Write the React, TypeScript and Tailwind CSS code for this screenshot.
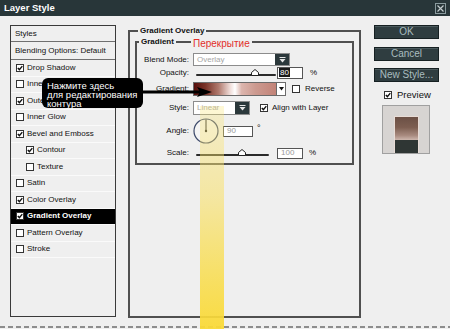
import React from "react";

function Check({ checked }: { checked?: boolean }) {
  return (
    <span className="w-[8px] h-[8px] border border-[#333] bg-white flex items-center justify-center shrink-0">
      {checked && (
        <svg width="6" height="6" viewBox="0 0 6 6">
          <path d="M0.8 2.9 L2.4 4.6 L5.3 1.1" stroke="#111" strokeWidth="1.4" fill="none" />
        </svg>
      )}
    </span>
  );
}

function DarkArrowBtn() {
  return (
    <div className="w-[14px] bg-[#2b383b] flex items-center justify-center">
      <svg width="7" height="6" viewBox="0 0 7 6">
        <rect x="0.5" y="0" width="6" height="1" fill="#e6e6e6" />
        <path d="M0.5 2 H6.5 L3.5 5.5 Z" fill="#e6e6e6" />
      </svg>
    </div>
  );
}

function Slider({ w, h, trackTop, thumbTop, thumb }: { w: string; h: string; trackTop: string; thumbTop: string; thumb: number }) {
  return (
    <div className={`relative shrink-0 ${w} ${h}`}>
      <div className={`absolute left-[3px] right-[1px] h-[2px] bg-[#2a2a2a] rounded-full ${trackTop}`} />
      <svg className={`absolute ${thumbTop}`} style={{ left: thumb }} width="8" height="7" viewBox="0 0 8 7">
        <path d="M0.5 6.5 V3.5 L4 0.5 L7.5 3.5 V6.5 Z" fill="#fff" stroke="#222" strokeWidth="1" />
      </svg>
    </div>
  );
}

const rows: { label: string; checked?: boolean; indent?: boolean; selected?: boolean }[] = [
  { label: "Drop Shadow", checked: true },
  { label: "Inner Shadow" },
  { label: "Outer Glow", checked: true },
  { label: "Inner Glow" },
  { label: "Bevel and Emboss", checked: true },
  { label: "Contour", checked: true, indent: true },
  { label: "Texture", indent: true },
  { label: "Satin" },
  { label: "Color Overlay", checked: true },
  { label: "Gradient Overlay", checked: true, selected: true },
  { label: "Pattern Overlay" },
  { label: "Stroke" },
];

function Btn({ children, className }: { children: React.ReactNode; className?: string }) {
  return (
    <div
      className={`h-[14px] bg-[#2f3d40] border border-[#162022] shadow-[inset_0_1px_0_#4c5b5e] flex items-center justify-center text-[10px] leading-none text-[#a9bcbf] ${className ?? ""}`}
    >
      {children}
    </div>
  );
}

export default function App() {
  return (
    <div className="w-[450px] h-[329px] relative overflow-hidden bg-[#efefef] flex flex-col font-['Liberation_Sans',Arial,sans-serif] text-[#111]">
      {/* title bar */}
      <div className="h-[16px] shrink-0 bg-[#283639] flex items-center justify-between pl-[4px] pr-[4px]">
        <span className="text-white font-bold text-[9.5px] leading-none">Layer Style</span>
        <span className="w-[11px] h-[11px] border border-[#8a9b9e] flex items-center justify-center">
          <svg width="7" height="7" viewBox="0 0 7 7">
            <path d="M0.5 0.5 L6.5 6.5 M6.5 0.5 L0.5 6.5" stroke="#c3ccce" strokeWidth="1.2" />
          </svg>
        </span>
      </div>

      {/* body */}
      <div className="flex flex-1 items-start">
        {/* left list */}
        <div className="ml-[10px] mt-[9px] w-[106px] h-[292px] border border-[#3a3a3a] flex flex-col text-[8px] leading-none">
          <div className="h-[16px] flex items-center pl-[4px] border-b border-[#6f6f6f]">Styles</div>
          <div className="h-[18px] flex items-center pl-[4px] border-b border-[#6f6f6f]">Blending Options: Default</div>
          {rows.map((r) => (
            <div
              key={r.label}
              className={`h-[16.5px] flex items-center gap-[3px] border-b border-[#fafafa] ${r.indent ? "pl-[15px]" : "pl-[5px]"} ${r.selected ? "bg-black text-white font-bold" : ""}`}
            >
              <Check checked={r.checked} />
              <span>{r.label}</span>
            </div>
          ))}
        </div>

        {/* middle group */}
        <fieldset className="ml-[12px] mt-[10px] w-[233px] h-[292px] border-2 border-[#505050] px-[5px]">
          <legend className="ml-[3px] px-[2px] text-[8px] font-bold leading-[10px]">Gradient Overlay</legend>
          <fieldset className="mt-[1px] h-[128px] border-2 border-[#505050] text-[8px] leading-none">
            <legend className="ml-[2px] px-[2px] text-[8px] font-bold leading-[10px]">Gradient</legend>

            {/* Blend Mode */}
            <div className="mt-[6px] h-[13px] flex items-center">
              <span className="w-[52px] text-right">Blend Mode:</span>
              <div className="ml-[4px] w-[97px] h-[13px] flex border border-[#8c8c8c] bg-white">
                <div className="flex-1 pl-[3px] flex items-center text-[#a6a6a6]">Overlay</div>
                <DarkArrowBtn />
              </div>
            </div>

            {/* Opacity */}
            <div className="h-[13px] flex items-center">
              <span className="w-[52px] text-right">Opacity:</span>
              <div className="ml-[4px] flex items-center h-[13px]">
                <Slider w="w-[84px]" h="h-[13px]" trackTop="top-[8px]" thumbTop="top-[3px]" thumb={58} />
                <div className="w-[26px] h-[12px] border border-[#555] bg-white flex items-center pl-[1px]">
                  <span className="bg-[#1a1a1a] text-white px-[1px] h-[9px] flex items-center">80</span>
                </div>
                <span className="ml-[7px]">%</span>
              </div>
            </div>

            {/* Gradient */}
            <div className="mt-[3px] h-[14px] flex items-center">
              <span className="w-[52px] text-right">Gradient:</span>
              <div className="ml-[4px] flex items-center h-[14px]">
                <div className="w-[84px] h-[14px] border border-[#6a6a6a] bg-[linear-gradient(90deg,#550d0a_0%,#7a3328_14%,#b07a6e_30%,#efdcd8_44%,#ffffff_50%,#dcb5ad_58%,#cc9a90_75%,#c28378_100%)]" />
                <div className="w-[9px] h-[14px] border border-l-0 border-[#6a6a6a] bg-white flex items-center justify-center">
                  <svg width="5" height="4" viewBox="0 0 5 4">
                    <path d="M0 0 H5 L2.5 3.5 Z" fill="#111" />
                  </svg>
                </div>
                <span className="ml-[6px]">
                  <Check />
                </span>
                <span className="ml-[5px]">Reverse</span>
              </div>
            </div>

            {/* Style */}
            <div className="mt-[5px] h-[14px] flex items-center">
              <span className="w-[52px] text-right">Style:</span>
              <div className="ml-[4px] w-[57px] h-[14px] flex border border-[#8c8c8c] bg-white">
                <div className="flex-1 pl-[3px] flex items-center text-[#a6a6a6]">Linear</div>
                <DarkArrowBtn />
              </div>
              <span className="ml-[10px]">
                <Check checked />
              </span>
              <span className="ml-[4px]">Align with Layer</span>
            </div>

            {/* Angle */}
            <div className="mt-[3px] h-[26px] flex items-center">
              <span className="w-[52px] text-right">Angle:</span>
              <svg className="ml-[4px]" width="26" height="26" viewBox="0 0 26 26">
                <circle cx="13" cy="13" r="12" fill="#f4f4f4" stroke="#3d4a6b" strokeWidth="1.2" />
                <line x1="13" y1="13" x2="13" y2="1.5" stroke="#222" strokeWidth="1" />
                <circle cx="13" cy="13" r="1.2" fill="#222" />
              </svg>
              <div className="ml-[4px] w-[30px] h-[11px] border border-[#555] bg-white flex items-center pl-[3px] text-[#999]">90</div>
              <span className="ml-[4px] self-start mt-[6px] text-[9px]">°</span>
            </div>

            {/* Scale */}
            <div className="mt-[3px] h-[12px] flex items-center">
              <span className="w-[52px] text-right">Scale:</span>
              <div className="ml-[4px] flex items-center h-[12px]">
                <Slider w="w-[77px]" h="h-[12px]" trackTop="top-[7px]" thumbTop="top-[2px]" thumb={45} />
                <div className="ml-[7px] w-[26px] h-[11px] border border-[#555] bg-white flex items-center pl-[3px] text-[#999]">100</div>
                <span className="ml-[6px]">%</span>
              </div>
            </div>
          </fieldset>
        </fieldset>

        {/* right column */}
        <div className="ml-[13px] mt-[9px] w-[65px] flex flex-col">
          <Btn>OK</Btn>
          <Btn className="mt-[8px]">Cancel</Btn>
          <Btn className="mt-[7px]">New Style...</Btn>
          <div className="mt-[8px] ml-[10px] h-[9px] flex items-center gap-[5px]">
            <Check checked />
            <span className="text-[9.5px] leading-none">Preview</span>
          </div>
          <div className="mt-[6px] ml-[8px] w-[48px] h-[49px] bg-[#d7d4d2] border border-[#a0a0a0] flex justify-center items-end">
            <div className="w-[25px] h-[37px] flex flex-col border border-b-0 border-[#e8dcd6]">
              <div className="flex-1 bg-[linear-gradient(180deg,#6b5045_0%,#7d5e51_45%,#a88a7f_80%,#cdb6ad_100%)]" />
              <div className="h-[13px] bg-[#2f3634]" />
            </div>
          </div>
        </div>
      </div>

      {/* dashed bottom */}
      <div className="h-[2px] shrink-0 bg-[repeating-linear-gradient(90deg,#8d8d8d_0_5px,transparent_5px_8px)]" />
      <div className="h-px shrink-0" />

      {/* overlays */}
      <span className="absolute left-[191px] top-[38px] bg-[#efefef] px-[2px] text-[10px] leading-[11px] text-[#e2302a]">Перекрытие</span>

      <div className="absolute left-[200px] top-[106px] w-[24px] bottom-0 bg-[linear-gradient(180deg,rgba(250,230,120,0.3)_0%,rgba(249,224,100,0.55)_40%,rgba(249,220,70,0.85)_80%,rgba(250,218,55,0.95)_100%)]" />

      <svg className="absolute left-[140px] top-[84px]" width="75" height="16" viewBox="0 0 75 16">
        <line x1="0" y1="8" x2="60" y2="8" stroke="#000" strokeWidth="3" />
        <path d="M57 3 L72 8 L57 13 L60 8 Z" fill="#000" />
      </svg>

      <div className="absolute left-[42px] top-[78px] w-[101px] h-[30px] bg-black rounded-[6px] pl-[5px] pt-[3px] text-white text-[9.5px] leading-[9px]">
        <div>Нажмите здесь</div>
        <div>для редактирования</div>
        <div>контура</div>
      </div>
    </div>
  );
}
